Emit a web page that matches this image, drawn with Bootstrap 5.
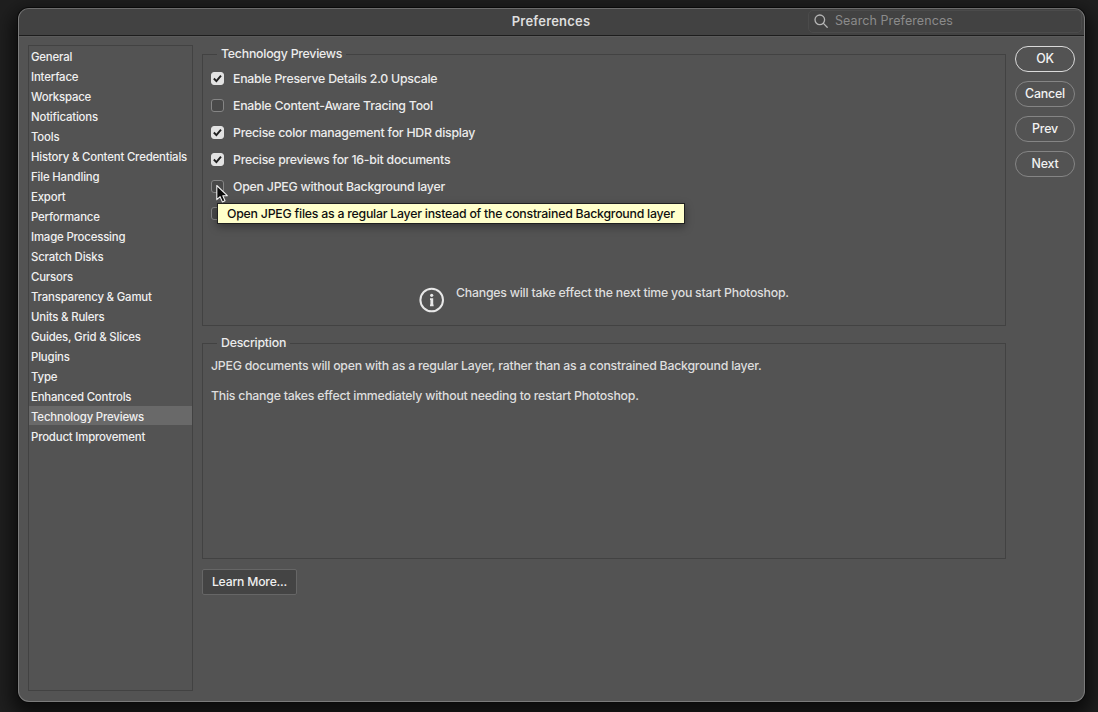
<!DOCTYPE html>
<html lang="en">
<head>
<meta charset="utf-8">
<title>Preferences</title>
<meta name="viewport" content="width=device-width, initial-scale=1">
<link rel="stylesheet" href="https://cdn.jsdelivr.net/npm/bootstrap@5.3.0/dist/css/bootstrap.min.css">
<style>
  body { height: 712px; padding: 8px 13px 10px 18px; background: #1f1f1f; font-family: Inter, "Liberation Sans", sans-serif; font-size: 12.3px; font-weight: 450; letter-spacing: -.225px; line-height: 20px; color: #ececec; }
  .pref-window { background: #535353; border: 1px solid #7b7b7b; border-top-color: #6c6c6c; border-radius: 11px; box-shadow: 0 0 0 1px #0a0a0a, 0 8px 18px 6px rgba(0,0,0,.62); }
  .title-bar { height: 27px; background: #424242; border-bottom: 1px solid #1d1d1d; border-radius: 10px 10px 0 0; }
  .window-title { font-size: 13px; font-weight: 600; letter-spacing: .2px; color: #dedede; margin: -2px 0 0 -1px; }
  .search-box { width: 274px; height: 23px; right: 2px; top: 1px; border: 1px solid #4b4b4b; border-radius: 5px; color: #8b8b8b; padding: 0 0 1px 5px; gap: 7px; font-size: 12.5px; letter-spacing: .08px; font-weight: 400; }
  .window-body { padding: 9px 9px 10px; gap: 9px; box-shadow: inset 0 1px 0 #5b5b5b; }
  .side-list { width: 165px; border: 1px solid #424242; font-size: 11.4px; font-weight: 500; letter-spacing: -.175px; }
  .side-list .list-group-item { height: 20px; padding: 1px 2px 0; border: 0; border-radius: 0; background: none; color: #f0f0f0; white-space: nowrap; }
  .side-list .list-group-item.active { background: linear-gradient(#696969, #696969) 0 0 / 100% 19px no-repeat; }
  .pref-main { width: 804px; padding-top: 9px; }
  .panel { border: 1px solid #424242; }
  .panel-previews { height: 272px; }
  .panel-description { height: 216px; margin-top: 17px; padding-left: 8px; color: #dedede; }
  .panel-title { margin-top: -12px; margin-left: 14px; padding: 1px 4px 0; background: #535353; width: max-content; color: #ececec; }
  .panel-description .panel-title { margin-left: 6px; }
  .panel-description p { margin: 3px 0 10px; }
  .panel-description p + p { margin-top: 0; }
  .options { margin-top: 1px; }
  .option { height: 27px; padding-left: 8px; }
  .option .form-check-input { width: 13px; height: 13px; margin: -1px 9px 0 0; border: 1px solid #858585; border-radius: 3px; background-color: #494949; background-size: 100%; }
  .option .form-check-input:checked { background-color: #e2e2e2; border-color: #e2e2e2; background-image: url("data:image/svg+xml,%3Csvg xmlns='http://www.w3.org/2000/svg' viewBox='0 0 12 12'%3E%3Cpath d='M2 6 4.8 8.8 9.8 2.8' fill='none' stroke='%23202020' stroke-width='2.1'/%3E%3C/svg%3E"); }
  .hint { left: 217px; top: 203px; height: 21px; width: 468px; padding-left: 9px; background: #ffffcb; border: 1px solid #202020; color: #101010; white-space: nowrap; box-shadow: 0 3px 8px rgba(0,0,0,.35); }
  .pointer { left: 215px; top: 184px; }
  .notice { margin: 56px 0 0 216px; gap: 11px; color: #dedede; }
  .pill-column { gap: 9px; padding-top: 1px; }
  .pill-btn { width: 60px; height: 26px; padding: 0; border: 1px solid #858585; border-radius: 13px; font-size: 12.4px; font-weight: 500; letter-spacing: -.2px; line-height: 22px; color: #f2f2f2; }
  .pill-btn.primary { border: 1.5px solid #dadada; }
  .learn-btn { width: 95px; height: 26px; margin-top: 10px; padding: 0; background: #444; border: 1px solid #666; border-radius: 2px; font-size: 12.2px; font-weight: 500; letter-spacing: -.2px; line-height: 24px; color: #f0f0f0; }
</style>
</head>
<body class="overflow-hidden">
<div class="pref-window d-flex flex-column h-100">
  <header class="title-bar position-relative d-flex align-items-center justify-content-center">
    <span class="window-title">Preferences</span>
    <div class="search-box position-absolute d-flex align-items-center">
      <svg width="14" height="14" viewBox="0 0 14 14" fill="none" stroke="#b5b5b5" stroke-width="1.3" stroke-linecap="round"><circle cx="5.8" cy="5.8" r="4.8"/><path d="m9.4 9.4 3.8 3.8"/></svg>
      <span>Search Preferences</span>
    </div>
  </header>
  <div class="window-body d-flex flex-grow-1">
    <nav class="side-list list-group rounded-0 flex-shrink-0">
      <a class="list-group-item">General</a>
      <a class="list-group-item">Interface</a>
      <a class="list-group-item">Workspace</a>
      <a class="list-group-item">Notifications</a>
      <a class="list-group-item">Tools</a>
      <a class="list-group-item">History &amp; Content Credentials</a>
      <a class="list-group-item">File Handling</a>
      <a class="list-group-item">Export</a>
      <a class="list-group-item">Performance</a>
      <a class="list-group-item">Image Processing</a>
      <a class="list-group-item">Scratch Disks</a>
      <a class="list-group-item">Cursors</a>
      <a class="list-group-item">Transparency &amp; Gamut</a>
      <a class="list-group-item">Units &amp; Rulers</a>
      <a class="list-group-item">Guides, Grid &amp; Slices</a>
      <a class="list-group-item">Plugins</a>
      <a class="list-group-item">Type</a>
      <a class="list-group-item">Enhanced Controls</a>
      <a class="list-group-item active m-0">Technology Previews</a>
      <a class="list-group-item">Product Improvement</a>
    </nav>
    <main class="pref-main flex-shrink-0">
      <section class="panel panel-previews">
        <div class="panel-title">Technology Previews</div>
        <div class="options">
          <label class="option d-flex align-items-center"><input class="form-check-input" type="checkbox" checked><span>Enable Preserve Details 2.0 Upscale</span></label>
          <label class="option d-flex align-items-center"><input class="form-check-input" type="checkbox"><span>Enable Content-Aware Tracing Tool</span></label>
          <label class="option d-flex align-items-center"><input class="form-check-input" type="checkbox" checked><span>Precise color management for HDR display</span></label>
          <label class="option d-flex align-items-center"><input class="form-check-input" type="checkbox" checked><span>Precise previews for 16-bit documents</span></label>
          <label class="option d-flex align-items-center"><input class="form-check-input" type="checkbox"><span>Open JPEG without Background layer</span></label>
          <label class="option d-flex align-items-center"><input class="form-check-input" type="checkbox"></label>
        </div>
        <div class="notice d-flex">
          <svg class="mt-1" width="26" height="26" viewBox="0 0 26 26"><circle cx="12.7" cy="13" r="11.3" fill="none" stroke="#e8e8e8" stroke-width="2"/><circle cx="12.7" cy="8.3" r="1.6" fill="#e8e8e8"/><path d="M11 11.3h3.2v6.3h.4v1.7h-3.6v-1.7h.4v-4.6H11z" fill="#e8e8e8"/></svg>
          <span>Changes will take effect the next time you start Photoshop.</span>
        </div>
      </section>
      <section class="panel panel-description">
        <div class="panel-title">Description</div>
        <p>JPEG documents will open with as a regular Layer, rather than as a constrained Background layer.</p>
        <p>This change takes effect immediately without needing to restart Photoshop.</p>
      </section>
      <button class="btn learn-btn">Learn More...</button>
    </main>
    <div class="pill-column d-flex flex-column">
      <button class="btn pill-btn primary">OK</button>
      <button class="btn pill-btn">Cancel</button>
      <button class="btn pill-btn">Prev</button>
      <button class="btn pill-btn">Next</button>
    </div>
  </div>
</div>
<div class="hint position-absolute">Open JPEG files as a regular Layer instead of the constrained Background layer</div>
<svg class="pointer position-absolute" width="14" height="20" viewBox="0 0 14 20"><path d="M1.8 1.5v14.2l3.3-3 2.3 5.2 2.6-1.2-2.2-5h4.5z" fill="#0c0c0c" stroke="#f2f2f2" stroke-width="1.1" stroke-linejoin="round"/></svg>
<script src="https://cdn.jsdelivr.net/npm/bootstrap@5.3.0/dist/js/bootstrap.bundle.min.js"></script>
</body>
</html>
